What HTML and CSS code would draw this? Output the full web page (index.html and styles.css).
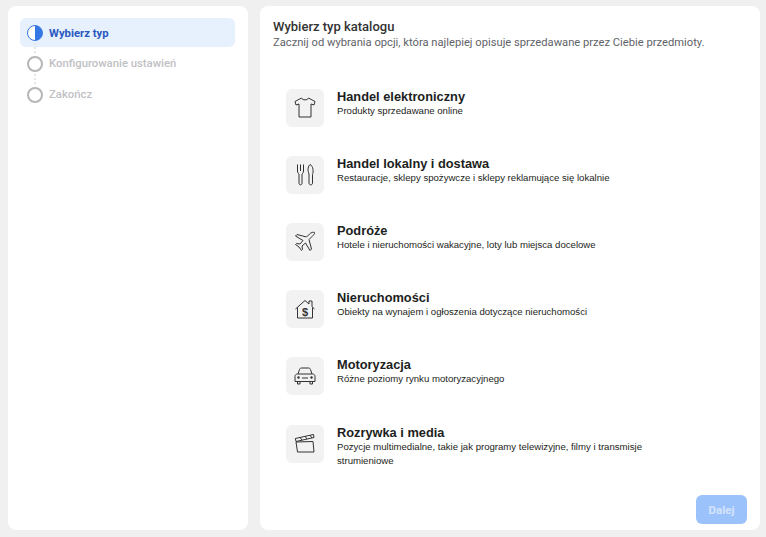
FILE: index.html
```html
<!DOCTYPE html>
<html lang="pl">
<head>
  <meta charset="UTF-8" />
  <meta name="viewport" content="width=device-width, initial-scale=1.0"/>
  <title>Wybierz typ katalogu</title>
  <link rel="stylesheet" href="styles.css">
</head>
<body>

  <div class="page">
    <!-- kroki -->
    <aside class="sidebar">
      <div class="step step-active">
        <span class="step-circle step-circle-half"></span>
        <span class="step-label">Wybierz typ</span>
      </div>
      <div class="step-dots"></div>
      <div class="step">
        <span class="step-circle"></span>
        <span>Konfigurowanie ustawień</span>
      </div>
      <div class="step-dots"></div>
      <div class="step">
        <span class="step-circle"></span>
        <span>Zakończ</span>
      </div>
    </aside>

    <main class="content">
      <h1>Wybierz typ katalogu</h1>
      <p class="lead">Zacznij od wybrania opcji, która najlepiej opisuje sprzedawane przez Ciebie przedmioty.</p>

      <div class="options">
        <div class="option">
          <div class="tile">
            <svg viewBox="0 0 24 24"><path d="M8.500 2 2 5.500 3 9 6 8V21H18V8L21 9 22 5.500 15.500 2C14.500 4.500 9.500 4.500 8.500 2Z"/></svg>
          </div>
          <div>
            <h2>Handel elektroniczny</h2>
            <p>Produkty sprzedawane online</p>
          </div>
        </div>

        <div class="option">
          <div class="tile">
            <svg viewBox="0 0 24 24"><path d="M4.500 1.500V8C4.500 9.500 5.300 10.500 6 11V20C6 22.500 9 22.500 9 20V11C9.700 10.500 10.500 9.500 10.500 8V1.500M7.500 1.500V8"/><path d="M17 1.500C15 3 14.500 7 15.500 9.500L16 11V20C16 22.500 19.500 22.500 19.500 20V11.500C20.500 9.500 20.500 3 17 1.500Z"/></svg>
          </div>
          <div>
            <h2>Handel lokalny i dostawa</h2>
            <p>Restauracje, sklepy spożywcze i sklepy reklamujące się lokalnie</p>
          </div>
        </div>

        <div class="option">
          <div class="tile">
            <svg viewBox="0 0 24 24"><path d="M21.500 2.500C20.500 1.800 18 2.500 16.500 4L13.500 7 4 4.500 2.500 6 10 10.500 7 14 3.500 13.500 2.500 14.500 6 17 8.500 20.500 9.500 19.500 9 16 12.500 13 17 20.500 18.500 19 16 9.500 19 6.500C20.500 5 22 3.500 21.500 2.500Z"/></svg>
          </div>
          <div>
            <h2>Podróże</h2>
            <p>Hotele i nieruchomości wakacyjne, loty lub miejsca docelowe</p>
          </div>
        </div>

        <div class="option">
          <div class="tile">
            <svg viewBox="0 0 24 24"><path d="M2.500 12 12 3.500 16 7V4H19V9.700L21.500 12M4.500 10.500V21H19.500V10.500"/><text x="12" y="18.500" text-anchor="middle">$</text></svg>
          </div>
          <div>
            <h2>Nieruchomości</h2>
            <p>Obiekty na wynajem i ogłoszenia dotyczące nieruchomości</p>
          </div>
        </div>

        <div class="option">
          <div class="tile">
            <svg viewBox="0 0 24 24"><path d="M5 10 6.500 5.500C6.800 4.500 7.500 4 8.500 4H15.500C16.500 4 17.200 4.500 17.500 5.500L19 10"/><path d="M4.500 10H19.500C21 10 22 11 22 12.500V17.500H2V12.500C2 11 3 10 4.500 10Z"/><path d="M4.500 17.500V20H7V17.500M17 17.500V20H19.500V17.500M9 14H15"/><circle class="dot" cx="5.500" cy="13.500" r="1.200"/><circle class="dot" cx="18.500" cy="13.500" r="1.200"/></svg>
          </div>
          <div>
            <h2>Motoryzacja</h2>
            <p>Różne poziomy rynku motoryzacyjnego</p>
          </div>
        </div>

        <div class="option">
          <div class="tile">
            <svg viewBox="0 0 24 24"><path d="M3 10 4.500 20H21L20 9.500Z"/><path d="M2.300 6.500 20.500 2.500 21 5.500 3 9.500Z"/><path d="M7 5.400 9 8.200M12 4.300 14 7.100M17 3.200 19 6"/></svg>
          </div>
          <div>
            <h2>Rozrywka i media</h2>
            <p>Pozycje multimedialne, takie jak programy telewizyjne, filmy i transmisje strumieniowe</p>
          </div>
        </div>
      </div>

      <div class="actions">
        <button disabled>Dalej</button>
      </div>
    </main>
  </div>

</body>
</html>
```

FILE: styles.css
```css
body {
  margin: 0;
  background-color: #f0f0f0;
  font-family: 'Roboto', 'Liberation Sans', sans-serif;
}
.page {
  display: flex;
  gap: 12px;
  height: 537px;
  box-sizing: border-box;
  padding: 6px 6px 7px 8px;
}
.sidebar, .content {
  background: white;
  border-radius: 8px;
  box-sizing: border-box;
}
.sidebar {
  width: 240px;
  padding: 12px 13px 12px 12px;
}
.content {
  flex: 1;
  padding: 13px 13px 6px 13px;
  display: flex;
  flex-direction: column;
}

/* kroki */
.step {
  display: flex;
  align-items: center;
  gap: 6px;
  height: 29px;
  padding-left: 7px;
  font-size: 11.300px;
  font-weight: 500;
  color: #bfc1c4;
  border-radius: 6px;
}
.step-active {
  background-color: #e7f0fd;
  color: #2a58c0;
  font-weight: 700;
}
.step-label {
  padding-top: 1px;
}
.step-circle {
  width: 12px;
  height: 12px;
  border: 2px solid #b4b6b8;
  border-radius: 50%;
  flex-shrink: 0;
}
.step-circle-half {
  border: 1px solid #3578e5;
  width: 14px;
  height: 14px;
  background: linear-gradient(90deg, white 50%, #3578e5 50%);
}
.step-dots {
  height: 2px;
  position: relative;
}
.step-dots::before {
  content: '';
  position: absolute;
  left: 14px;
  top: -4px;
  width: 2px;
  height: 10px;
  background: repeating-linear-gradient(#e6e6e6 0 2px, transparent 2px 4px);
}

/* tytul */
h1 {
  margin: 0;
  font-size: 13px;
  line-height: 15px;
  font-weight: 500;
  color: #333;
}
.lead {
  margin: 1px 0 0;
  font-size: 11.200px;
  line-height: 16px;
  color: #5f6368;
}

/* lista */
.options {
  margin-top: 38px;
  padding-left: 13px;
}
.option {
  display: flex;
  gap: 13px;
  height: 67.120px;
}
.tile {
  width: 38px;
  height: 38px;
  background-color: #f2f2f2;
  border-radius: 6px;
  display: flex;
  align-items: center;
  justify-content: center;
  flex-shrink: 0;
}
.tile svg {
  width: 24px;
  height: 24px;
  fill: none;
  stroke: #333;
  stroke-width: 1;
  stroke-linejoin: round;
}
.tile svg text {
  font-family: 'Liberation Sans', sans-serif;
  font-size: 11px;
  font-weight: 700;
  fill: #333;
  stroke: none;
}
.tile svg .dot {
  fill: #333;
  stroke: none;
}
h2 {
  margin: 0;
  font-family: 'Liberation Sans', sans-serif;
  font-size: 12.800px;
  line-height: 15px;
  font-weight: 700;
  color: #1c1e21;
}
.option p {
  margin: 0;
  max-width: 340px;
  font-family: 'Liberation Sans', sans-serif;
  font-size: 9.600px;
  line-height: 14px;
  color: #1c1e21;
}

.actions {
  margin-top: auto;
  display: flex;
  justify-content: flex-end;
}
button {
  width: 51px;
  height: 29px;
  background-color: #9cc2fb;
  color: #d5e4fb;
  border: none;
  border-radius: 6px;
  font-family: inherit;
  font-size: 11.500px;
  font-weight: 700;
}
```
